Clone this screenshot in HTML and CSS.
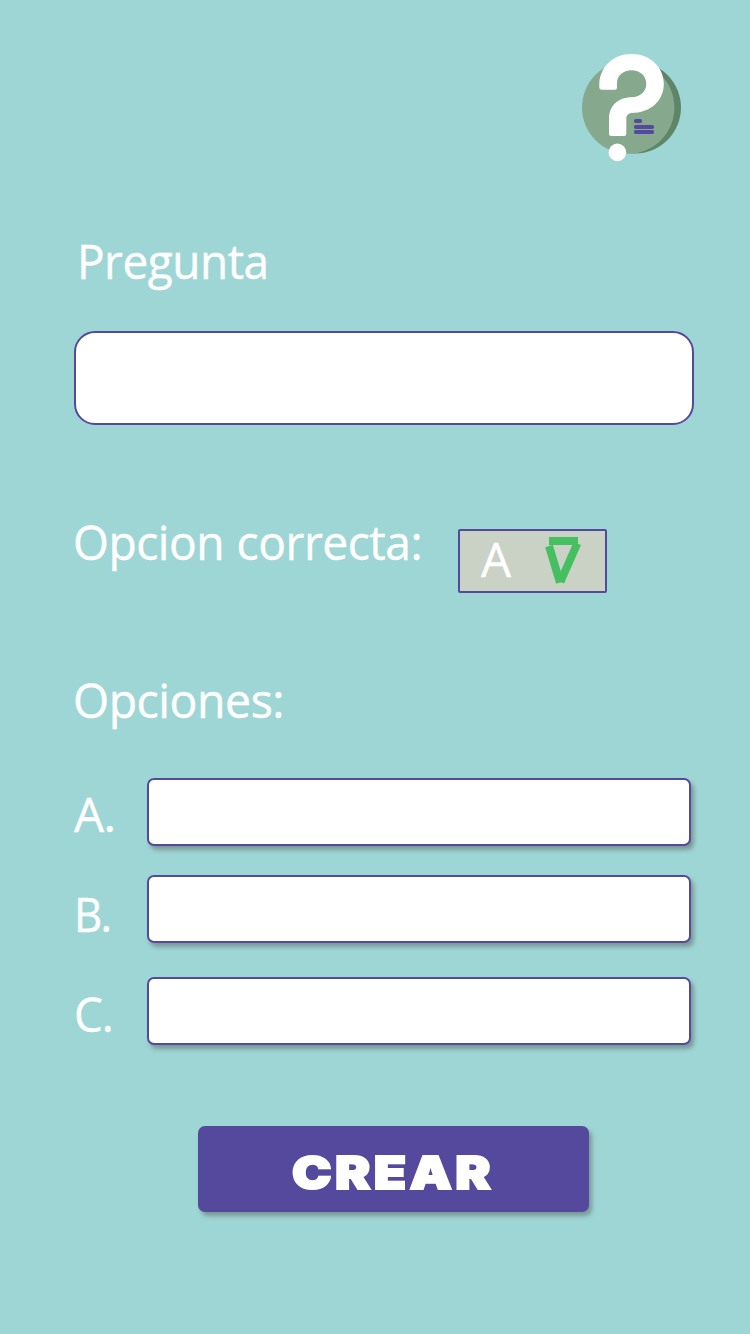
FILE: index.html
```html
<!DOCTYPE html>
<html lang="es">
<head>
<meta charset="utf-8">
<title>Crear pregunta</title>
<link rel="stylesheet" href="styles.css">
</head>
<body>
<main class="screen">
  <header class="header">
    <svg class="logo" viewBox="582 54 100 108" width="100" height="108">
      <circle cx="635" cy="107.5" r="46" fill="#5f8568"/>
      <circle cx="628.2" cy="107.5" r="46.2" fill="#86a98e"/>
      <path fill="#fff" d="M602 89.7Q599.3 89.7 599.3 87V84C599.8 67 613 54 631.5 54C650 54 663.8 67 663.8 84C663.8 101 650 113 631.5 113Q626.3 113.5 626.3 118.5V134Q626.3 136 624.3 136H611Q609 136 609 134V119C609 106 618 97.3 631.5 97.3C640 97.3 646.3 91.5 646.3 84C646.3 76 640 70.3 631.5 70.3C623 70.3 617 76 617 83V87.7Q617 89.7 615 89.7Z"/>
      <circle cx="617.4" cy="152.4" r="8.8" fill="#fff"/>
      <g fill="#54499c">
        <rect x="634" y="119" width="8" height="4" rx="1.8"/>
        <rect x="634" y="125" width="20" height="4" rx="1.8"/>
        <rect x="634" y="130" width="20" height="4" rx="1.8"/>
      </g>
    </svg>
  </header>
  <label class="text label-question" for="question">Pregunta</label>
  <input class="field question" id="question" type="text">
  <div class="correct">
    <span class="text label-correct">Opcion correcta:</span>
    <div class="select">
      <span class="text value">A</span>
      <svg class="arrow" viewBox="544 536 38 48" width="38" height="48">
        <g fill="none" stroke="#45bf5f" stroke-width="8">
          <path d="M549 541H578"/>
          <path d="M549 546L560 582.5"/>
          <path d="M577.3 543.5L560.3 582"/>
        </g>
      </svg>
    </div>
  </div>
  <h2 class="text label-options">Opciones:</h2>
  <div class="option option-a"><label class="text" for="a">A.</label><input class="field" id="a" type="text"></div>
  <div class="option option-b"><label class="text" for="b">B.</label><input class="field" id="b" type="text"></div>
  <div class="option option-c"><label class="text" for="c">C.</label><input class="field" id="c" type="text"></div>
  <button class="create" type="button"><span class="create-text">CREAR</span></button>
</main>
</body>
</html>
```
FILE: styles.css
```css
* { box-sizing: border-box; }
body { margin: 0; background: #9ed6d5; }
.screen {
  display: flex;
  flex-direction: column;
  width: 750px;
  height: 1334px;
  padding-left: 74px;
  background: #9ed6d5;
}
.header {
  display: flex;
  justify-content: flex-end;
  height: 227px;
  padding: 54px 68px 0 0;
}
.logo, .arrow { display: block; flex: none; }
.text {
  margin: 0;
  padding-top: 2px;
  height: 64px;
  font: 400 47.5px/63px "Open Sans", "Noto Sans", sans-serif;
  color: #fff;
  white-space: nowrap;
  -webkit-text-stroke: .4px #fff;
  transform-origin: left;
}
.label-question { padding-left: 3px; letter-spacing: -.5px; transform: scaleX(.968); }
.field {
  display: block;
  margin: 0;
  padding: 0 16px;
  border: 2px solid #54499c;
  background: #fff;
  font: 32px "Open Sans", sans-serif;
  outline: none;
}
.question {
  width: 620px;
  height: 94px;
  margin-top: 40px;
  border-radius: 21px;
}
.correct {
  display: flex;
  height: 85px;
  margin-top: 83px;
}
.label-correct {
  width: 384px;
  margin-left: -1px;
  letter-spacing: -.5px;
  word-spacing: 1px;
  transform: scaleX(.972);
}
.select {
  display: flex;
  width: 149px;
  height: 64px;
  margin: 21px 0 0 1px;
  padding-left: 21px;
  border: 2px solid #54499c;
  border-radius: 2px;
  background: #c9d2c5;
}
.value { width: 63px; margin-top: -6px; }
.arrow { margin-top: 5px; }
.label-options { margin: 73px 0 0 -1px; letter-spacing: -.5px; transform: scaleX(.978); }
.option { display: flex; height: 68px; }
.option .text { width: 73px; }
.option .field {
  width: 544px;
  height: 68px;
  border-radius: 7px;
  box-shadow: 3px 4px 4px rgba(80, 80, 80, .45);
}
.option-a { margin-top: 48px; }
.option-b { margin-top: 29px; }
.option-c { margin-top: 34px; }
.option-a .text { margin-top: 2px; letter-spacing: -.5px; }
.option-b .text { margin-top: 5px; letter-spacing: -2px; transform: scaleX(.92); }
.option-c .text { margin-top: 3px; letter-spacing: -1px; transform: scaleX(.96); }
.create {
  width: 391px;
  height: 86px;
  margin: 81px 0 0 124px;
  padding: 7px 0 0;
  border: 0;
  border-radius: 7px;
  background: #54499c;
  box-shadow: 3px 4px 4px rgba(80, 80, 80, .45);
  color: #fff;
  font: 900 45px/1 Inter, sans-serif;
  letter-spacing: 3px;
}
.create-text {
  display: inline-block;
  transform: scaleX(1.175);
  -webkit-text-stroke: 2px #fff;
}
```
